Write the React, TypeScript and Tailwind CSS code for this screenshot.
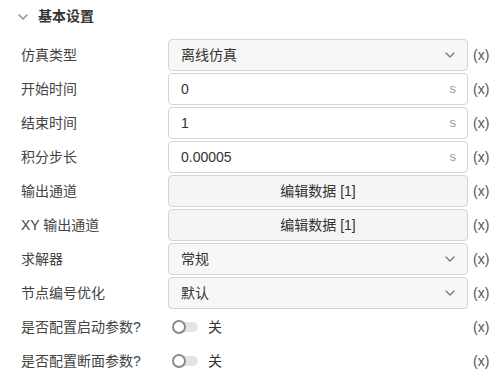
import React from "react";

const font = { fontFamily: '"Liberation Sans", "Noto Sans CJK SC", sans-serif' };

function Chevron({ className }: { className?: string }) {
  return (
    <svg className={className} width="10" height="6" viewBox="0 0 10 6" fill="none">
      <path d="M1 1l4 4 4-4" stroke="currentColor" strokeWidth="1.3" strokeLinecap="round" strokeLinejoin="round" />
    </svg>
  );
}

type Field =
  | { kind: "select"; value: string }
  | { kind: "input"; value: string }
  | { kind: "button"; value: string }
  | { kind: "toggle"; value: string };

const rows: { label: string; field: Field }[] = [
  { label: "仿真类型", field: { kind: "select", value: "离线仿真" } },
  { label: "开始时间", field: { kind: "input", value: "0" } },
  { label: "结束时间", field: { kind: "input", value: "1" } },
  { label: "积分步长", field: { kind: "input", value: "0.00005" } },
  { label: "输出通道", field: { kind: "button", value: "编辑数据 [1]" } },
  { label: "XY 输出通道", field: { kind: "button", value: "编辑数据 [1]" } },
  { label: "求解器", field: { kind: "select", value: "常规" } },
  { label: "节点编号优化", field: { kind: "select", value: "默认" } },
  { label: "是否配置启动参数?", field: { kind: "toggle", value: "关" } },
  { label: "是否配置断面参数?", field: { kind: "toggle", value: "关" } },
];

function FieldBox({ field }: { field: Field }) {
  if (field.kind === "toggle") {
    return (
      <div className="flex h-[32px] items-center pl-[4px]">
        <div className="relative h-[10px] w-[26px] rounded-full bg-[#e4e4e4]">
          <div className="absolute left-0 top-[-2px] h-[14px] w-[14px] rounded-full border-2 border-[#8a8a8a] bg-white" />
        </div>
        <span className="ml-[10px] text-[14px] text-[#333]">{field.value}</span>
      </div>
    );
  }
  if (field.kind === "button") {
    return (
      <div className="flex h-[32px] items-center justify-center rounded-[4px] border border-[#d4d4d4] bg-[#f5f5f5] text-[14px] text-[#333]">
        {field.value}
      </div>
    );
  }
  if (field.kind === "select") {
    return (
      <div className="flex h-[32px] items-center justify-between rounded-[4px] border border-[#d4d4d4] bg-[#f7f7f7] pl-[12px] pr-[12px] text-[14px] text-[#333]">
        <span>{field.value}</span>
        <Chevron className="text-[#777]" />
      </div>
    );
  }
  return (
    <div className="flex h-[32px] items-center justify-between rounded-[4px] border border-[#d4d4d4] bg-white pl-[12px] pr-[11px] text-[14px] text-[#333]">
      <span>{field.value}</span>
      <span className="text-[13px] text-[#999]">s</span>
    </div>
  );
}

export default function App() {
  return (
    <div className="h-[382px] w-[496px] bg-white" style={font}>
      <div className="flex h-[33px] items-center pl-[18px]">
        <Chevron className="text-[#888]" />
        <span className="ml-[10px] text-[14px] font-bold text-[#333]">基本设置</span>
      </div>
      <div className="mt-[6px] flex flex-col gap-[2px] pl-[21px]">
        {rows.map((r, i) => (
          <div key={i} className="flex items-center">
            <div className="w-[147px] text-[14px] text-[#444]">{r.label}</div>
            <div className="w-[300px]">
              <FieldBox field={r.field} />
            </div>
            <div className="ml-[5px] text-[14px] text-[#555]">(x)</div>
          </div>
        ))}
      </div>
    </div>
  );
}
